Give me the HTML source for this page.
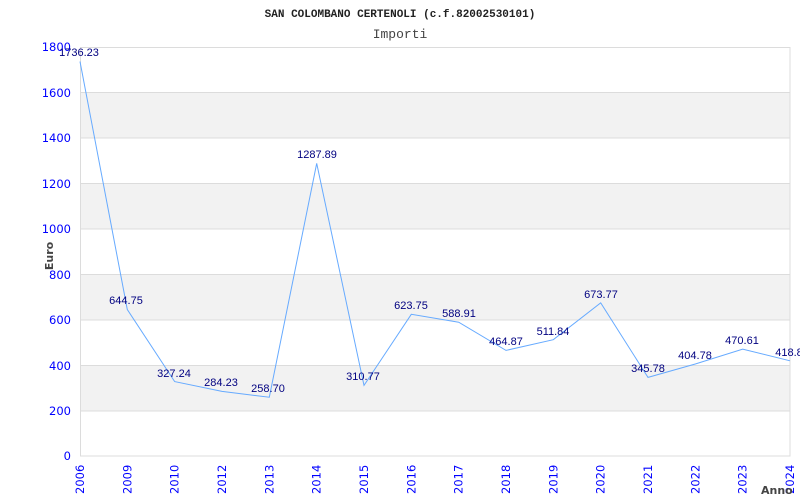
<!DOCTYPE html>
<html><head><style>body{margin:0;background:#fff}svg{display:block}</style></head><body>
<svg width="800" height="500" xmlns="http://www.w3.org/2000/svg">
<rect width="800" height="500" fill="#fff"/>
<g fill="#f2f2f2">
<rect x="80" y="92.4" width="710" height="45.5"/>
<rect x="80" y="183.3" width="710" height="45.5"/>
<rect x="80" y="274.2" width="710" height="45.5"/>
<rect x="80" y="365.1" width="710" height="45.5"/>
</g>
<g stroke="#dcdcdc" stroke-width="1">
<line x1="80" x2="790" y1="92.5" y2="92.5"/><line x1="80" x2="790" y1="138" y2="138"/>
<line x1="80" x2="790" y1="183.5" y2="183.5"/><line x1="80" x2="790" y1="229" y2="229"/>
<line x1="80" x2="790" y1="274.5" y2="274.5"/><line x1="80" x2="790" y1="320" y2="320"/>
<line x1="80" x2="790" y1="365.5" y2="365.5"/><line x1="80" x2="790" y1="411" y2="411"/>
<rect x="80.5" y="47.5" width="709.5" height="408.5" fill="none"/>
</g>
<text x="400" y="17" text-anchor="middle" font-family="Liberation Mono,monospace" font-size="11" font-weight="bold" fill="#222">SAN COLOMBANO CERTENOLI (c.f.82002530101)</text>
<text x="400" y="38" text-anchor="middle" font-family="Liberation Mono,monospace" font-size="13" fill="#444">Importi</text>
<g font-family="DejaVu Sans,sans-serif" font-size="11.5" fill="#0000ff" text-anchor="end">
<text x="71" y="51">1800</text><text x="71" y="97">1600</text><text x="71" y="142">1400</text>
<text x="71" y="188">1200</text><text x="71" y="233">1000</text><text x="71" y="279">800</text>
<text x="71" y="324">600</text><text x="71" y="370">400</text><text x="71" y="415">200</text>
<text x="71" y="460">0</text>
</g>
<text transform="translate(53,256) rotate(-90)" text-anchor="middle" font-family="DejaVu Sans,sans-serif" font-size="11" font-weight="bold" fill="#444">Euro</text>
<g font-family="DejaVu Sans,sans-serif" font-size="11.5" fill="#0000ff" text-anchor="start">
<text transform="translate(84,494) rotate(-90)">2006</text>
<text transform="translate(131.3,494) rotate(-90)">2009</text>
<text transform="translate(178.7,494) rotate(-90)">2010</text>
<text transform="translate(226,494) rotate(-90)">2012</text>
<text transform="translate(273.3,494) rotate(-90)">2013</text>
<text transform="translate(320.7,494) rotate(-90)">2014</text>
<text transform="translate(368,494) rotate(-90)">2015</text>
<text transform="translate(415.3,494) rotate(-90)">2016</text>
<text transform="translate(462.7,494) rotate(-90)">2017</text>
<text transform="translate(510,494) rotate(-90)">2018</text>
<text transform="translate(557.3,494) rotate(-90)">2019</text>
<text transform="translate(604.7,494) rotate(-90)">2020</text>
<text transform="translate(652,494) rotate(-90)">2021</text>
<text transform="translate(699.3,494) rotate(-90)">2022</text>
<text transform="translate(746.7,494) rotate(-90)">2023</text>
<text transform="translate(794,494) rotate(-90)">2024</text>
</g>
<text x="761" y="494" font-family="DejaVu Sans,sans-serif" font-size="11" font-weight="bold" fill="#444">Anno</text>
<polyline fill="none" stroke="#66aaff" stroke-width="1" points="80,61.5 127.3,309.5 174.7,381.6 222,391.4 269.3,397.2 316.7,163.4 364,385.4 411.3,314.3 458.7,322.2 506,350.4 553.3,339.7 600.7,302.9 648,377.4 695.3,364 742.7,349.1 790,360.8"/>
<g font-family="Liberation Sans,sans-serif" font-size="11" fill="#000080" text-anchor="middle">
<text x="79" y="56">1736.23</text>
<text x="126" y="304">644.75</text>
<text x="174" y="377">327.24</text>
<text x="221" y="386">284.23</text>
<text x="268" y="392">258.70</text>
<text x="317" y="158">1287.89</text>
<text x="363" y="380">310.77</text>
<text x="411" y="309">623.75</text>
<text x="459" y="317">588.91</text>
<text x="506" y="345">464.87</text>
<text x="553" y="335">511.84</text>
<text x="601" y="298">673.77</text>
<text x="648" y="372">345.78</text>
<text x="695" y="359">404.78</text>
<text x="742" y="344">470.61</text>
<text x="789" y="356">418.8</text>
</g>
</svg>
</body></html>
